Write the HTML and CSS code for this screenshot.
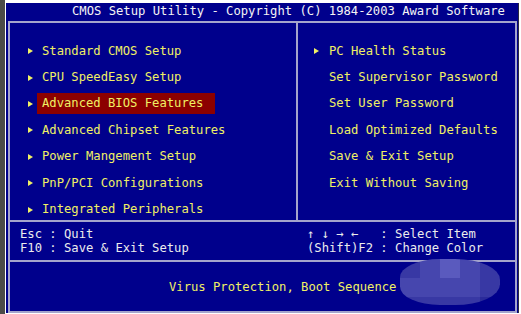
FILE: index.html
```html
<html>
  <head>
    <title>CMOS Setup Utility</title>
    <link rel="stylesheet" href="styles.css">
  </head>
  <body>
    <div class="wrap">
      <div class="strip"></div>
      <div class="bios">
        <div class="title">CMOS Setup Utility - Copyright (C) 1984-2003 Award Software</div>
        <div class="frame">
          <div class="menu">
            <!-- left menu -->
            <div class="col col-left">
              <div class="row"><span class="arrow"></span><span class="label">Standard CMOS Setup</span></div>
              <div class="row"><span class="arrow"></span><span class="label">CPU SpeedEasy Setup</span></div>
              <div class="row"><span class="arrow"></span><span class="label selected">Advanced BIOS Features</span></div>
              <div class="row"><span class="arrow"></span><span class="label">Advanced Chipset Features</span></div>
              <div class="row"><span class="arrow"></span><span class="label">Power Mangement Setup</span></div>
              <div class="row"><span class="arrow"></span><span class="label">PnP/PCI Configurations</span></div>
              <div class="row"><span class="arrow"></span><span class="label">Integrated Peripherals</span></div>
            </div>
            <!-- right menu -->
            <div class="col col-right">
              <div class="row"><span class="arrow"></span><span class="label">PC Health Status</span></div>
              <div class="row"><span class="arrow none"></span><span class="label">Set Supervisor Password</span></div>
              <div class="row"><span class="arrow none"></span><span class="label">Set User Password</span></div>
              <div class="row"><span class="arrow none"></span><span class="label">Load Optimized Defaults</span></div>
              <div class="row"><span class="arrow none"></span><span class="label">Save &amp; Exit Setup</span></div>
              <div class="row"><span class="arrow none"></span><span class="label">Exit Without Saving</span></div>
            </div>
          </div>
          <div class="help">
            <div class="keys keys-left">Esc : Quit
F10 : Save &amp; Exit Setup</div>
            <div class="keys keys-right">↑ ↓ → ←   : Select Item
(Shift)F2 : Change Color</div>
          </div>
          <div class="status">
            <span class="status-text">Virus Protection, Boot Sequence</span>
            <!-- pixelated blur over the rest of the line -->
            <div class="mosaic">
              <span class="b1"></span><span class="b2"></span><span class="b3"></span><span class="b2"></span><span class="b1"></span>
              <span class="b2"></span><span class="b2"></span><span class="b2"></span><span class="b2"></span><span class="b1"></span>
              <span class="b1"></span><span class="b1"></span><span class="b1"></span><span class="b1"></span><span class="b0"></span>
            </div>
          </div>
        </div>
      </div>
    </div>
  </body>
</html>
```

FILE: styles.css
```css
body {
  margin: 0;
  background: #ffffff;
  font-family: "DejaVu Sans Mono", "Liberation Mono", monospace;
  font-size: 12.2px;
}
.wrap {
  display: flex;
  height: 314px;
}
.strip {
  width: 5px;
  background: #4b4b48;
}
.bios {
  margin: 3px 0 0 1px;
  width: 512px;
  height: 310px;
  background: #00008c;
  border-right: 1px solid #2a2a40;
  display: flex;
  flex-direction: column;
}
.title {
  height: 18px;
  line-height: 17px;
  padding-left: 66px;
  color: #f4f4f4;
  white-space: pre;
}
.frame {
  position: relative;
  margin-left: 2px;
  width: 509px;
  flex: 1;
  box-sizing: border-box;
  border: 2px solid #a4a4cc;
  display: flex;
  flex-direction: column;
}
.menu {
  height: 197px;
  display: flex;
}
.col {
  padding-top: 15px;
  box-sizing: border-box;
}
.col-left {
  width: 288px;
  padding-left: 18px;
  border-right: 2px solid #a4a4cc;
}
.col-right {
  flex: 1;
  padding-left: 16px;
}
.row {
  height: 26.4px;
  display: flex;
  align-items: center;
  color: #f0f064;
  white-space: pre;
}
.arrow {
  width: 9px;
  height: 6px;
  display: flex;
  align-items: center;
}
.arrow::before {
  content: "";
  border-left: 5px solid #f0f064;
  border-top: 3px solid transparent;
  border-bottom: 3px solid transparent;
}
.arrow.none::before {
  display: none;
}
.label {
  height: 21px;
  line-height: 21px;
  padding: 0 12px 0 5px;
}
.col-right .label {
  padding-left: 6px;
}
.label.selected {
  background: #8c0000;
}
.help {
  height: 38px;
  border-top: 2px solid #a4a4cc;
  border-bottom: 2px solid #a4a4cc;
  display: flex;
  align-items: center;
  color: #ececec;
}
.keys {
  white-space: pre;
  line-height: 14px;
}
.keys-left {
  width: 287px;
  padding-left: 10px;
}
.status {
  flex: 1;
  display: flex;
  align-items: center;
  padding-left: 159px;
  color: #f0f064;
  white-space: pre;
}
.mosaic {
  position: absolute;
  left: 390px;
  top: 236px;
  width: 100px;
  height: 46px;
  border-radius: 40% 45% 45% 40%;
  overflow: hidden;
  display: grid;
  grid-template-columns: repeat(5, 20px);
  grid-template-rows: 19px 19px 8px;
}
.b0 { background: #2a2a9a; }
.b1 { background: #3838a4; }
.b2 { background: #4646ae; }
.b3 { background: #5a5abe; }
```
